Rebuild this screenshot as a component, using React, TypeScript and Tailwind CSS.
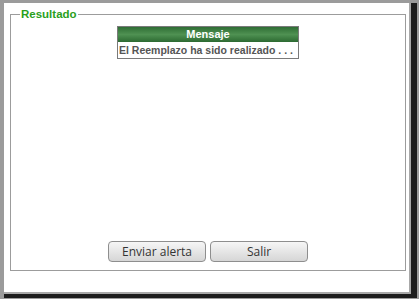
import React from 'react';

const App = () => {
  return (
    <div className="w-[419px] h-[299px] bg-[#9b9b9b] pt-[3px] pl-[4px] overflow-hidden">
      <div className="w-[413px] h-[295px] border-r-[6px] border-b-[4px] border-[#1c1c1c]">
        <div className="w-full h-full bg-white border-r-2 border-b-2 border-[#a8a8a8] pt-[4px] pl-[6px] pr-[3px]">
          <fieldset className="h-[264px] border border-[#9c9c9c] px-[8px] flex flex-col items-center">
            <legend
              className="ml-[1px] px-[1px] text-[11.5px] font-bold text-[#2aa01c] leading-[14px]"
              style={{ fontFamily: '"Liberation Sans", Arial, sans-serif' }}
            >
              Resultado
            </legend>
            <div className="mt-[5px] w-[182px] border border-[#7a7a7a]">
              <div
                className="h-[15px] bg-gradient-to-b from-[#2f6e35] via-[#4f9152] to-[#2c6a32] text-white text-[11px] font-bold text-center leading-[15px]"
                style={{ fontFamily: '"Liberation Sans", Arial, sans-serif' }}
              >
                Mensaje
              </div>
              <div
                className="h-[16px] bg-white text-[#555] text-[10.5px] font-bold leading-[16px] pl-[1px] whitespace-nowrap overflow-hidden"
                style={{ fontFamily: '"Liberation Sans", Arial, sans-serif' }}
              >
                El Reemplazo ha sido realizado . . .
              </div>
            </div>
            <div className="flex-1" />
            <div className="flex gap-[4px] mb-[8px]">
              <button className="w-[98px] h-[21px] rounded-[4px] border border-[#8e8e8e] bg-gradient-to-b from-[#f6f6f6] to-[#d6d6d6] text-[12px] text-[#333] font-['Open_Sans',sans-serif] leading-[19px]">
                Enviar alerta
              </button>
              <button className="w-[98px] h-[21px] rounded-[4px] border border-[#8e8e8e] bg-gradient-to-b from-[#f6f6f6] to-[#d6d6d6] text-[12px] text-[#333] font-['Open_Sans',sans-serif] leading-[19px]">
                Salir
              </button>
            </div>
          </fieldset>
        </div>
      </div>
    </div>
  );
};

export default App;
